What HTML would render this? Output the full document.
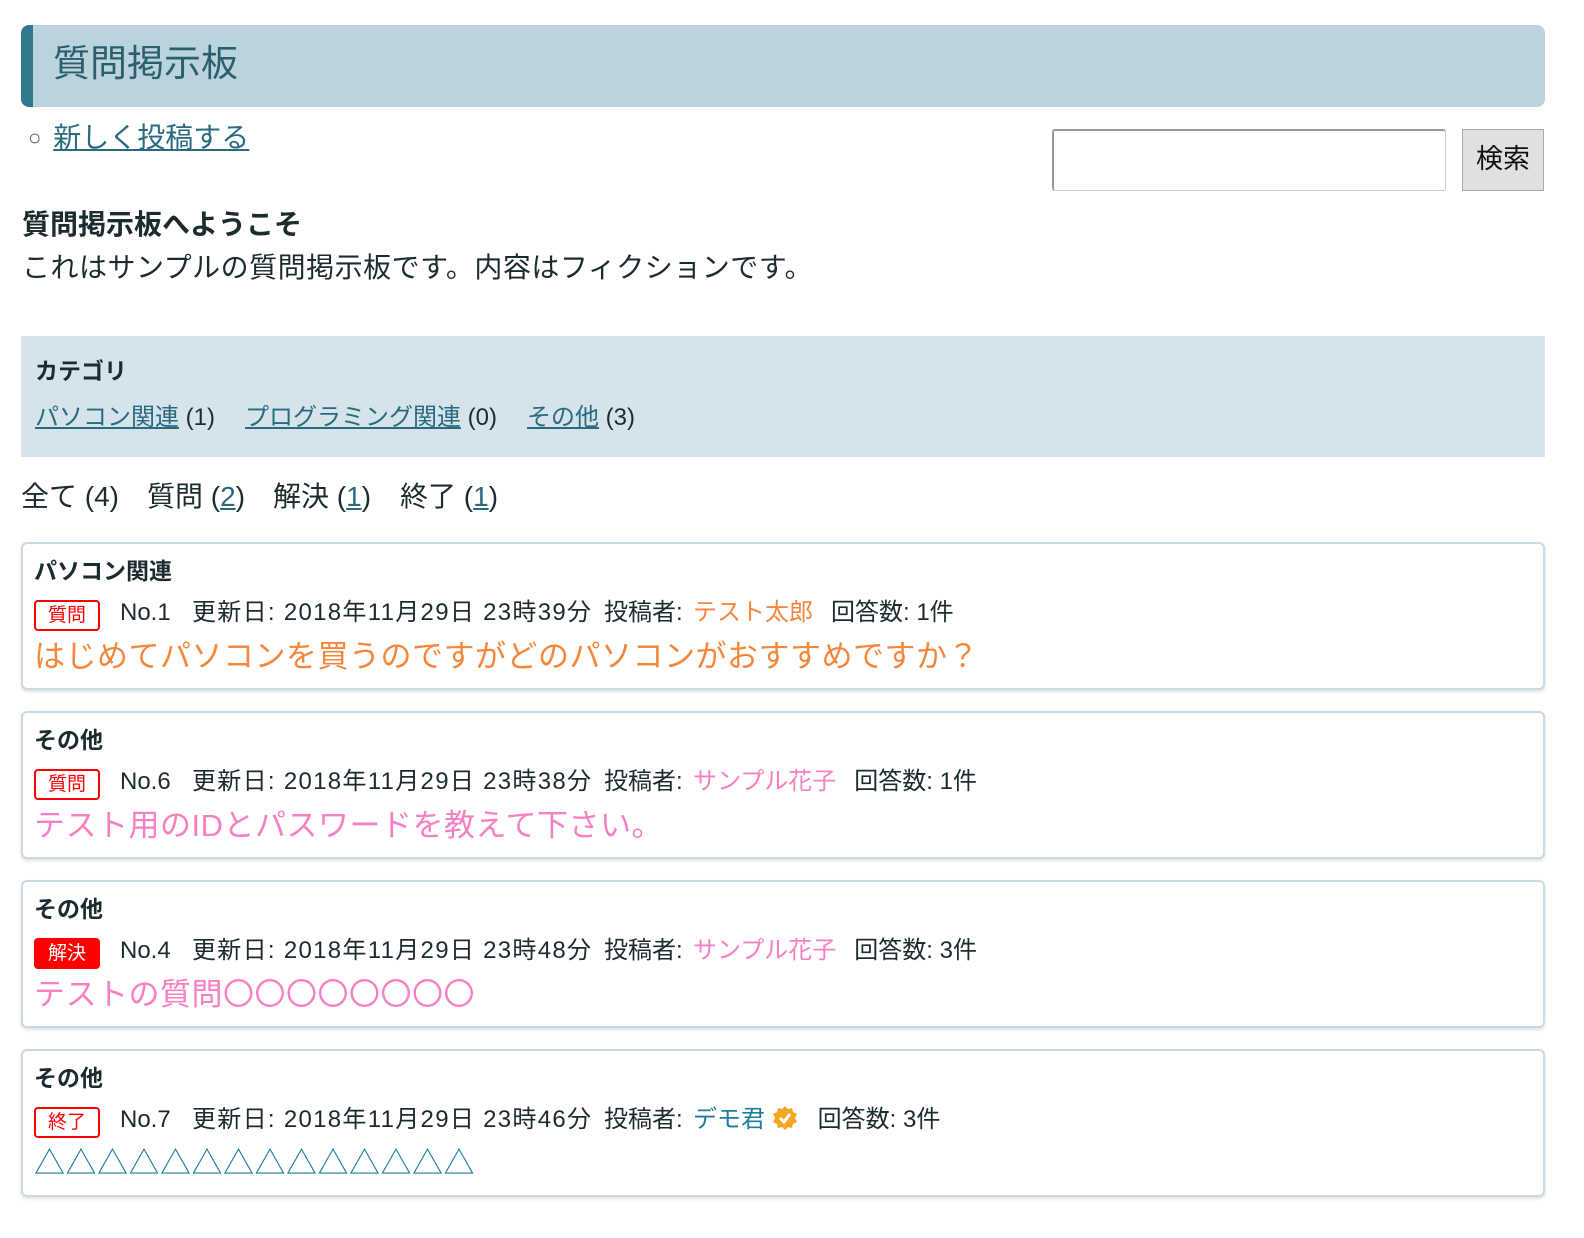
<!DOCTYPE html>
<html><head><meta charset="utf-8"><style>
*{box-sizing:border-box;margin:0;padding:0}
body{width:1584px;height:1238px;background:#fff;font-family:"Liberation Sans","Noto Sans CJK JP",sans-serif;color:#1b2b30;position:relative;overflow:hidden}
a{color:#2a6a80}
.hd{position:absolute;left:21px;top:25px;width:1524px;height:82px;background:#bad3dc;border-left:12px solid #2f7a8c;border-radius:8px}
.hd span{position:absolute;left:20px;top:14px;font-size:37px;line-height:50px;color:#2c5f6e}
.new{position:absolute;left:28px;top:118px;font-size:28px;line-height:40px}
.new i{font-style:normal;font-size:22px;color:#555;margin-right:12px;vertical-align:2px}
.inp{position:absolute;left:1052px;top:129px;width:394px;height:62px;border:1px solid #ccc;border-top:2px solid #999;border-left:2px solid #999;border-radius:3px}
.btn{position:absolute;left:1462px;top:129px;width:82px;height:62px;background:#e0e0e0;border:1px solid #aaa;font-size:27px;line-height:58px;text-align:center;color:#111}
.wt{position:absolute;left:22px;top:205px;font-size:28px;line-height:40px;font-weight:bold}
.wb{position:absolute;left:22px;top:248px;font-size:28px;line-height:40px;letter-spacing:0.5px}
.cat{position:absolute;left:21px;top:336px;width:1524px;height:121px;background:#d5e4ea}
.cat .t{position:absolute;left:14px;top:18px;font-size:23px;line-height:34px;font-weight:bold}
.cat .l{position:absolute;left:14px;top:65px;font-size:24px;line-height:34px;white-space:nowrap}
.cat .l span{display:inline-block}
.flt{position:absolute;left:21px;top:477px;font-size:28px;line-height:40px;white-space:nowrap}
.flt span{display:inline-block}
.card{position:absolute;left:21px;width:1524px;height:148px;border:2px solid #c6dbe2;border-radius:6px;box-shadow:0 2px 3px rgba(0,0,0,.12);background:#fff}
.card .c{position:absolute;left:11px;top:10px;font-size:23px;line-height:34px;font-weight:bold}
.card .m{position:absolute;left:11px;top:52px;font-size:24px;line-height:34px;white-space:nowrap}
.m span{display:inline-block}
.m .n{width:72px}.m .d{width:412px;letter-spacing:1.3px}.m .p{width:89px}.m .w{margin-right:18px}
.card .q{position:absolute;left:11px;top:92px;font-size:31px;line-height:42px;white-space:nowrap;letter-spacing:0.5px}
.b{display:inline-block;width:66px;height:31px;border:2px solid #f00;border-radius:4px;color:#f00;font-size:19px;line-height:27px;text-align:center;margin-right:20px;vertical-align:-1px}
.b.s{background:#f00;color:#fff}
.or{color:#f5873c}.pk{color:#f77fc3}.bl{color:#1f7ea0}
</style></head><body>
<div class="hd"><span>質問掲示板</span></div>
<div class="new"><i>○</i><a href="#">新しく投稿する</a></div>
<div class="inp"></div><div class="btn">検索</div>
<div class="wt">質問掲示板へようこそ</div>
<div class="wb">これはサンプルの質問掲示板です。内容はフィクションです。</div>
<div class="cat"><div class="t">カテゴリ</div><div class="l"><span style="width:210px"><a href="#">パソコン関連</a> (1)</span><span style="width:282px"><a href="#">プログラミング関連</a> (0)</span><span><a href="#">その他</a> (3)</span></div></div>
<div class="flt"><span style="width:126px">全て (4)</span><span style="width:126px">質問 (<a href="#">2</a>)</span><span style="width:127px">解決 (<a href="#">1</a>)</span><span>終了 (<a href="#">1</a>)</span></div>

<div class="card" style="top:542px"><div class="c">パソコン関連</div><div class="m"><span class="b">質問</span><span class="n">No.1</span><span class="d">更新日: 2018年11月29日 23時39分</span><span class="p">投稿者:</span><span class="or w">テスト太郎</span>回答数: 1件</div><div class="q or">はじめてパソコンを買うのですがどのパソコンがおすすめですか？</div></div>
<div class="card" style="top:711px"><div class="c">その他</div><div class="m"><span class="b">質問</span><span class="n">No.6</span><span class="d">更新日: 2018年11月29日 23時38分</span><span class="p">投稿者:</span><span class="pk w">サンプル花子</span>回答数: 1件</div><div class="q pk">テスト用のIDとパスワードを教えて下さい。</div></div>
<div class="card" style="top:880px"><div class="c">その他</div><div class="m"><span class="b s">解決</span><span class="n">No.4</span><span class="d">更新日: 2018年11月29日 23時48分</span><span class="p">投稿者:</span><span class="pk w">サンプル花子</span>回答数: 3件</div><div class="q pk">テストの質問〇〇〇〇〇〇〇〇</div></div>
<div class="card" style="top:1049px"><div class="c">その他</div><div class="m"><span class="b">終了</span><span class="n">No.7</span><span class="d">更新日: 2018年11月29日 23時46分</span><span class="p">投稿者:</span><span class="bl">デモ君</span> <svg width="26" height="26" viewBox="0 0 26 26" style="vertical-align:-4px;margin-right:20px"><path d="M13 1l3 3 4-1 1 4 4 2-2 4 2 4-4 2-1 4-4-1-3 3-3-3-4 1-1-4-4-2 2-4-2-4 4-2 1-4 4 1z" fill="#f5a623"/><path d="M8 13l4 4 6-8" stroke="#fff" stroke-width="3" fill="none"/></svg>回答数: 3件</div><div class="q bl">△△△△△△△△△△△△△△</div></div>
</body></html>
